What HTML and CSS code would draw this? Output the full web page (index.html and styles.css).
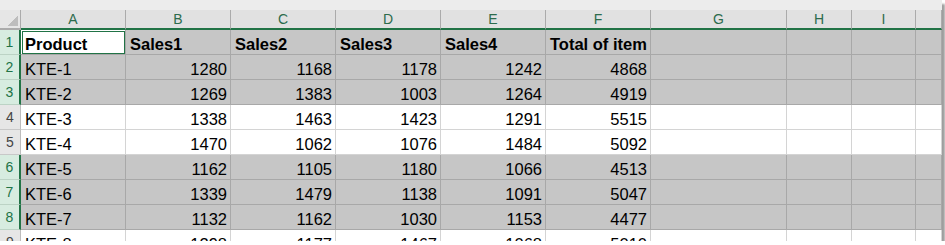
FILE: index.html
```html
<!DOCTYPE html>
<html lang="en">
<head>
    <meta charset="UTF-8">
    <title>Sheet</title>
    <link rel="stylesheet" href="styles.css">
</head>
<body>
    <div class="sheet">
        <div class="topbar"></div>
        <div class="row colhead">
            <div class="corner"></div>
            <div>A</div><div>B</div><div>C</div><div>D</div><div>E</div><div>F</div><div>G</div><div>H</div><div>I</div><div></div>
        </div>
        <div class="row sel">
            <div class="rh">1</div>
            <div class="c b active">Product</div>
            <div class="c b">Sales1</div>
            <div class="c b">Sales2</div>
            <div class="c b">Sales3</div>
            <div class="c b">Sales4</div>
            <div class="c b">Total of item</div>
            <div class="c"></div><div class="c"></div><div class="c"></div><div class="c"></div>
        </div>
        <div class="row sel">
            <div class="rh">2</div>
            <div class="c">KTE-1</div>
            <div class="c n">1280</div><div class="c n">1168</div><div class="c n">1178</div><div class="c n">1242</div><div class="c n">4868</div>
            <div class="c"></div><div class="c"></div><div class="c"></div><div class="c"></div>
        </div>
        <div class="row sel">
            <div class="rh">3</div>
            <div class="c">KTE-2</div>
            <div class="c n">1269</div><div class="c n">1383</div><div class="c n">1003</div><div class="c n">1264</div><div class="c n">4919</div>
            <div class="c"></div><div class="c"></div><div class="c"></div><div class="c"></div>
        </div>
        <div class="row">
            <div class="rh">4</div>
            <div class="c">KTE-3</div>
            <div class="c n">1338</div><div class="c n">1463</div><div class="c n">1423</div><div class="c n">1291</div><div class="c n">5515</div>
            <div class="c"></div><div class="c"></div><div class="c"></div><div class="c"></div>
        </div>
        <div class="row">
            <div class="rh">5</div>
            <div class="c">KTE-4</div>
            <div class="c n">1470</div><div class="c n">1062</div><div class="c n">1076</div><div class="c n">1484</div><div class="c n">5092</div>
            <div class="c"></div><div class="c"></div><div class="c"></div><div class="c"></div>
        </div>
        <div class="row sel">
            <div class="rh">6</div>
            <div class="c">KTE-5</div>
            <div class="c n">1162</div><div class="c n">1105</div><div class="c n">1180</div><div class="c n">1066</div><div class="c n">4513</div>
            <div class="c"></div><div class="c"></div><div class="c"></div><div class="c"></div>
        </div>
        <div class="row sel">
            <div class="rh">7</div>
            <div class="c">KTE-6</div>
            <div class="c n">1339</div><div class="c n">1479</div><div class="c n">1138</div><div class="c n">1091</div><div class="c n">5047</div>
            <div class="c"></div><div class="c"></div><div class="c"></div><div class="c"></div>
        </div>
        <div class="row sel">
            <div class="rh">8</div>
            <div class="c">KTE-7</div>
            <div class="c n">1132</div><div class="c n">1162</div><div class="c n">1030</div><div class="c n">1153</div><div class="c n">4477</div>
            <div class="c"></div><div class="c"></div><div class="c"></div><div class="c"></div>
        </div>
        <div class="row">
            <div class="rh">9</div>
            <div class="c">KTE-8</div>
            <div class="c n">1298</div><div class="c n">1177</div><div class="c n">1467</div><div class="c n">1068</div><div class="c n">5010</div>
            <div class="c"></div><div class="c"></div><div class="c"></div><div class="c"></div>
        </div>
    </div>
</body>
</html>
```

FILE: styles.css
```css
body {
    margin: 0;
    background-color: #fff;
    font-family: "Liberation Sans", Arial, sans-serif;
}
.sheet {
    width: 942px;
    height: 241px;
    overflow: hidden;
    background-color: #fff;
    box-shadow: 3px 4px 2px #9e9e9e;
}
.topbar {
    height: 10px;
    background-color: #ececec;
}
.row {
    display: grid;
    grid-template-columns: 21px repeat(6, 105px) 136px 65px 64px 1fr;
    height: 25px;
}
.row > div {
    box-sizing: border-box;
    border-right: 1px solid #d4d4d4;
    border-bottom: 1px solid #d4d4d4;
    overflow: hidden;
    white-space: nowrap;
}
.colhead {
    height: 20px;
    background-color: #e1e1e1;
}
.colhead > div {
    border-right-color: #ababab;
    border-bottom: 2px solid #217346;
    color: #2c6b4c;
    font-size: 14px;
    line-height: 18px;
    text-align: center;
}
.colhead .corner {
    position: relative;
    border-bottom-color: #ababab;
    border-right-color: #ababab;
    background-color: #e6e6e6;
}
.corner::after {
    content: "";
    position: absolute;
    right: 2px;
    bottom: 2px;
    width: 10px;
    height: 10px;
    background: linear-gradient(to bottom right, transparent 50%, #bdbdbd 50%);
}
.c {
    padding: 5px 3px 0 4px;
    font-size: 16.5px;
    line-height: 18px;
    color: #000;
}
.b {
    font-weight: bold;
}
.n {
    text-align: right;
}
.rh {
    background-color: #e6e6e6;
    color: #444;
    font-size: 14px;
    line-height: 24px;
    text-align: center;
}
.row > .rh {
    border-right-color: #bdbdbd;
    border-bottom-color: #c8c8c8;
}
.sel > .c {
    background-color: #c6c6c6;
    border-color: #a8a8a8;
}
.sel > .rh {
    background-color: #d7ece0;
    color: #217346;
    border-right: 2px solid #217346;
    border-bottom-color: #bcd3c5;
}
.sel > .active {
    background-color: #fff;
    outline: 1px solid #217346;
    outline-offset: -2px;
}
```
